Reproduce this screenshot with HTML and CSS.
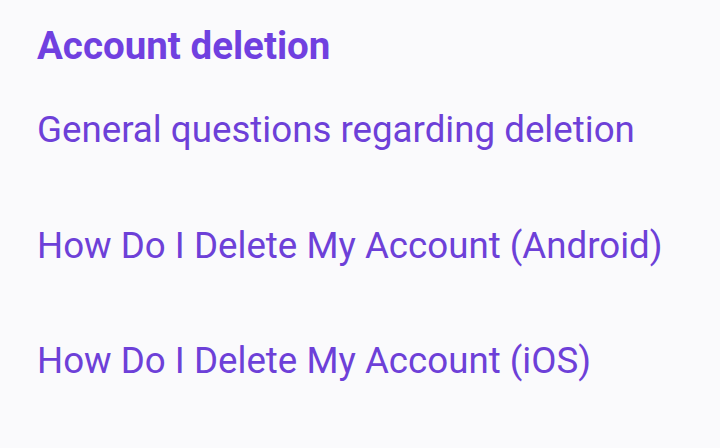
FILE: index.html
```html
<!DOCTYPE html>
<html lang="en">

<head>
    <meta charset="UTF-8">
    <meta name="viewport" content="width=device-width, initial-scale=1.0">
    <title>Account deletion</title>
    <link rel="stylesheet" href="styles.css">
</head>

<body>
    <div class="section">
        <h2 class="title">Account deletion</h2>
        <ul class="links">
            <li><a href="#">General questions regarding deletion</a></li>
            <li><a href="#">How Do I Delete My Account (Android)</a></li>
            <li><a href="#">How Do I Delete My Account (iOS)</a></li>
        </ul>
    </div>
</body>

</html>
```
FILE: styles.css
```css
* {
    margin: 0;
    padding: 0
}

ul {
    list-style: none
}

body {
    background-color: #fafafc;
    font-family: Roboto, "Liberation Sans", sans-serif;
}

.section {
    padding: 24px 37px;
}

.title {
    font-size: 38.5px;
    font-weight: 700;
    line-height: 44px;
    color: #7040e0;
}

.links {
    display: flex;
    flex-direction: column;
    gap: 71.5px;
    margin-top: 40px;
}

.links li {
    font-size: 36.7px;
    line-height: 44px;
}

.links a {
    color: #6d40d8;
    text-decoration: none;
}
```
